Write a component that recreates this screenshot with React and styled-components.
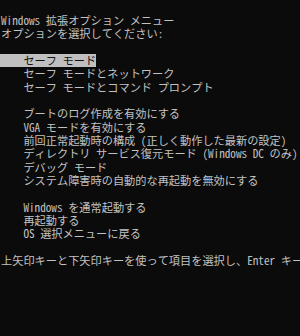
import React from 'react'
import styled, { createGlobalStyle } from 'styled-components'

const GlobalStyle = createGlobalStyle`
    html, body {
        margin: 0;
        padding: 0;
        background: #0b0b0b;
    }
`

const Screen = styled.div`
    width: 300px;
    height: 336px;
    overflow: hidden;
    background: #0b0b0b;
    color: #c2c2c2;
    font-family: "Noto Sans Mono CJK JP", "Noto Sans CJK JP", monospace;
    font-size: 11.2px;
    line-height: 13.33px;
    padding-top: 14px;
    box-sizing: border-box;
`

const Line = styled.div`
    white-space: pre;
    height: 13.33px;
    padding-left: 1px;
`

const Item = styled.span`
    display: inline-block;
    vertical-align: top;
    height: 13.33px;
    line-height: 13.33px;
    background: ${p => (p.$selected ? '#bfbfbf' : 'transparent')};
    color: ${p => (p.$selected ? '#111' : 'inherit')};
    padding-left: ${p => (p.$selected ? '1px' : '0')};
    margin-left: ${p => (p.$selected ? '-1px' : '0')};
`

const lines = [
    'Windows 拡張オプション メニュー',
    'オプションを選択してください:',
    '',
    { text: '    セーフ モード', selected: true },
    '    セーフ モードとネットワーク',
    '    セーフ モードとコマンド プロンプト',
    '',
    '    ブートのログ作成を有効にする',
    '    VGA モードを有効にする',
    '    前回正常起動時の構成 (正しく動作した最新の設定)',
    '    ディレクトリ サービス復元モード (Windows DC のみ)',
    '    デバッグ モード',
    '    システム障害時の自動的な再起動を無効にする',
    '',
    '    Windows を通常起動する',
    '    再起動する',
    '    OS 選択メニューに戻る',
    '',
    '上矢印キーと下矢印キーを使って項目を選択し、Enter キーを押してください。',
]

const App = () => {
    return (
        <Screen>
            <GlobalStyle />
            {lines.map((l, i) => {
                const text = typeof l === 'string' ? l : l.text
                const selected = typeof l === 'object' && l.selected
                return (
                    <Line key={i}>
                        <Item $selected={selected}>{text}</Item>
                    </Line>
                )
            })}
        </Screen>
    )
}

export default App
